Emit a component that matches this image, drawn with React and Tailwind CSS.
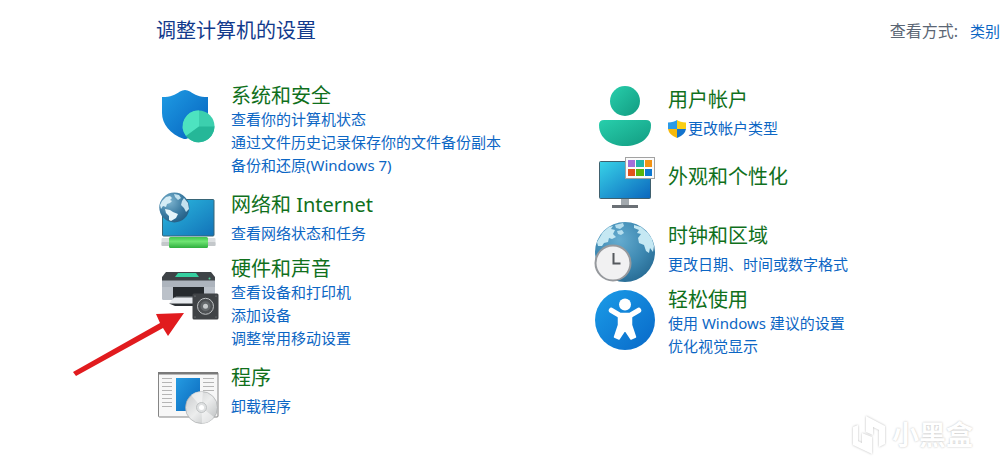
import React from 'react';

const SecurityIcon = () => (
  <svg viewBox="0 0 60 60" className="w-[60px] h-[60px] overflow-visible" aria-hidden="true">
    <defs>
      <linearGradient id="security-shield" x1="0" y1="0" x2="1" y2="1">
        <stop offset="0" stopColor="#1f9ce4" />
        <stop offset="1" stopColor="#0561bd" />
      </linearGradient>
    </defs>
    <path d="M4 11C13 11 17 9 22 5.500Q27 2.500 32 5.500C37 9 41 11 50 11V27C50 40 40 49 28 53H26C12 48 4 38 4 27Z" fill="url(#security-shield)" />
    <circle cx="40.700" cy="40.300" r="15.800" fill="#3ccfae" />
    <path d="M41 40.500V24.500A15.800 15.800 0 0 0 28 50Z" fill="#4de3c0" />
    <path d="M41 40.500H56.500A15.800 15.800 0 0 1 28 50Z" fill="#25b798" />
  </svg>
);

const NetworkIcon = () => (
  <svg viewBox="0 0 60 60" className="w-[60px] h-[60px] overflow-visible" aria-hidden="true">
    <defs>
      <linearGradient id="network-screen" x1="0" y1="0" x2="1" y2="1">
        <stop offset="0" stopColor="#2cbbe0" />
        <stop offset="1" stopColor="#1272b8" />
      </linearGradient>
      <radialGradient id="network-globe" cx="0.35" cy="0.3" r="0.8">
        <stop offset="0" stopColor="#7db4cf" />
        <stop offset="0.6" stopColor="#38789f" />
        <stop offset="1" stopColor="#215a80" />
      </radialGradient>
      <linearGradient id="network-cable" x1="0" y1="0" x2="0" y2="1">
        <stop offset="0" stopColor="#3fc44c" />
        <stop offset="0.4" stopColor="#6fe573" />
        <stop offset="1" stopColor="#2fae3e" />
      </linearGradient>
    </defs>
    <rect x="4.500" y="7.500" width="51.500" height="36.500" rx="1" fill="url(#network-screen)" stroke="#376577" />
    <rect x="3.500" y="46" width="54" height="8" rx="1" fill="#dcdfe1" />
    <rect x="3.500" y="50" width="54" height="4" rx="1" fill="#c4c8cb" />
    <rect x="11" y="45" width="39" height="11" rx="1.500" fill="url(#network-cable)" />
    <circle cx="16.300" cy="15.500" r="15" fill="url(#network-globe)" />
    <path d="M4 9L8 5L12 4L14 6L12 8L14 9L12 11L9 12L8 15L5 14L3 17L2 13Z" fill="#d5ecf5" />
    <path d="M16 2L21 3L23 6L20 8L17 5Z" fill="#c3e2ef" />
    <path d="M7 17L12 18L15 20L20 22L18 26L13 29L11 28L11 24L8 21Z" fill="#e6f5fa" />
    <path d="M26 6L30 11L31 17L28 20L26 16L23 13L24 9Z" fill="#c3e2ef" />
  </svg>
);

const HardwareIcon = () => (
  <svg viewBox="0 0 60 60" className="w-[60px] h-[60px] overflow-visible" aria-hidden="true">
    <path d="M4 20H57V39Q57 41 55 41H6Q4 41 4 39Z" fill="#adb4bd" />
    <path d="M4 28H57V39Q57 41 55 41H6Q4 41 4 39Z" fill="#bbc1c9" />
    <path d="M8 13H53L57 18V21.500H4V18Z" fill="#3e4347" />
    <path d="M20 14H38L41 18H17Z" fill="#36cfa0" />
    <circle cx="51.500" cy="19.500" r="1" fill="#55d49b" />
    <path d="M15 28H46V40H15Z" fill="#262a2e" />
    <path d="M18 37H44V41H16Z" fill="#53585d" />
    <path d="M16 38.500H36V44.500H11Z" fill="#e7eaee" />
    <path d="M11 44.500H36V47H17Z" fill="#2b2f33" />
    <rect x="34.500" y="34.500" width="26" height="26" rx="1.500" fill="#404346" />
    <circle cx="47.500" cy="47.300" r="8" fill="#4d5053" stroke="#bec1c3" />
    <circle cx="47.500" cy="47.300" r="5" fill="#65696c" />
    <circle cx="47.500" cy="47.300" r="2.500" fill="#c8cbcd" />
    <circle cx="37" cy="37" r="0.600" fill="#929699" />
    <circle cx="58" cy="37" r="0.600" fill="#929699" />
    <circle cx="37" cy="58" r="0.600" fill="#929699" />
    <circle cx="58" cy="58" r="0.600" fill="#929699" />
  </svg>
);

const ProgramsIcon = () => (
  <svg viewBox="0 0 60 60" className="w-[60px] h-[60px] overflow-visible" aria-hidden="true">
    <defs>
      <linearGradient id="programs-page" x1="0" y1="0" x2="1" y2="1">
        <stop offset="0" stopColor="#259be1" />
        <stop offset="1" stopColor="#0a67bc" />
      </linearGradient>
      <linearGradient id="programs-disc" x1="0" y1="0" x2="1" y2="1">
        <stop offset="0" stopColor="#c6c8ca" />
        <stop offset="0.5" stopColor="#eceded" />
        <stop offset="1" stopColor="#b7babc" />
      </linearGradient>
    </defs>
    <rect x="0.500" y="7.500" width="59.500" height="44.500" rx="1" fill="#f7f7f7" stroke="#858585" />
    <path d="M0 7H60V9.500H0Z" fill="#7a7a7a" />
    <rect x="18" y="13" width="24" height="33" fill="url(#programs-page)" />
    <path d="M4 13.500H14M4 17.500H14M4 21.500H14M4 25.500H14M4 29.500H14M4 33.500H14M4 37.500H14M4 41.500H14M45 13.500H56M45 17.500H56M45 21.500H56M45 25.500H56" stroke="#b5b5b5" />
    <circle cx="43.500" cy="42.500" r="16" fill="url(#programs-disc)" stroke="#a9acae" strokeWidth="0.700" />
    <path d="M43.500 42.500L33 30Q38 26 45 26.600ZM43.500 42.500L56 52Q51 58.500 44 58.500Z" fill="#fff" opacity="0.5" />
    <circle cx="43.500" cy="42.500" r="5" fill="#dfe1e2" stroke="#b4b7b9" strokeWidth="0.800" />
    <circle cx="43.500" cy="42.500" r="2.500" fill="#fff" />
  </svg>
);

const UserIcon = () => (
  <svg viewBox="0 0 60 60" className="w-[60px] h-[60px] overflow-visible" aria-hidden="true">
    <defs>
      <linearGradient id="user-body" x1="0" y1="0" x2="1" y2="1">
        <stop offset="0" stopColor="#28cfac" />
        <stop offset="1" stopColor="#129b81" />
      </linearGradient>
    </defs>
    <circle cx="30" cy="14" r="15" fill="url(#user-body)" />
    <path d="M9 33H51Q56 33 56 38C56 51 45 59 30 59S4 51 4 38Q4 33 9 33Z" fill="url(#user-body)" />
  </svg>
);

const AppearanceIcon = () => (
  <svg viewBox="0 0 60 60" className="w-[60px] h-[60px] overflow-visible" aria-hidden="true">
    <defs>
      <linearGradient id="appearance-screen" x1="0" y1="0" x2="1" y2="1">
        <stop offset="0" stopColor="#38d3e8" />
        <stop offset="1" stopColor="#0b66bd" />
      </linearGradient>
    </defs>
    <rect x="26" y="44" width="8" height="7" fill="#a3a9ae" />
    <rect x="17" y="50" width="26" height="3" fill="#6b7075" />
    <rect x="4.500" y="6.500" width="51" height="37" rx="1" fill="url(#appearance-screen)" stroke="#40606e" />
    <rect x="30.500" y="2.500" width="29" height="21" fill="#fbfbfb" stroke="#a2a2a2" />
    <rect x="33" y="5" width="7" height="7" fill="#a36fda" />
    <rect x="41" y="5" width="8" height="7" fill="#22b3aa" />
    <rect x="50" y="5" width="7" height="7" fill="#f39313" />
    <rect x="33" y="14" width="7" height="7" fill="#e2521b" />
    <rect x="41" y="14" width="8" height="7" fill="#59b40d" />
    <rect x="50" y="14" width="7" height="7" fill="#0c78d2" />
  </svg>
);

const ClockIcon = () => (
  <svg viewBox="0 0 60 60" className="w-[60px] h-[60px] overflow-visible" aria-hidden="true">
    <defs>
      <radialGradient id="clock-globe" cx="0.4" cy="0.3" r="0.75">
        <stop offset="0" stopColor="#65acd0" />
        <stop offset="0.6" stopColor="#3d88b1" />
        <stop offset="1" stopColor="#276b94" />
      </radialGradient>
    </defs>
    <circle cx="30" cy="29" r="30" fill="url(#clock-globe)" />
    <path d="M2 19L8 9L14 4L18 3L16 6L20 7L18 11L21 14L17 16L14 15L13 19L9 20L7 23L3 23Z" fill="#c5e8f3" />
    <path d="M20 2L28 0L29 3L25 6L21 5ZM22 8L27 7L29 10L26 12L23 11Z" fill="#b5deee" />
    <path d="M39 2L46 4L53 10L57 16L59 23L58 29L55 25L54 30L51 28L49 22L44 20L43 15L46 11L42 10L44 7L39 5Z" fill="#c5e8f3" />
    <circle cx="18" cy="40" r="17.500" fill="#f1f1f2" stroke="#96999d" strokeWidth="2" />
    <path d="M18.500 30V40.500H25.500" fill="none" stroke="#55595d" strokeWidth="2" />
  </svg>
);

const EaseIcon = () => (
  <svg viewBox="0 0 60 60" className="w-[60px] h-[60px] overflow-visible" aria-hidden="true">
    <defs>
      <linearGradient id="ease-disc" x1="0" y1="0" x2="1" y2="1">
        <stop offset="0" stopColor="#1b9de8" />
        <stop offset="1" stopColor="#0868c8" />
      </linearGradient>
    </defs>
    <circle cx="30" cy="30" r="30" fill="url(#ease-disc)" />
    <circle cx="30" cy="14.500" r="6" fill="#fff" />
    <path d="M16.500 20.500L25 25.500H35L43.500 20.500" fill="none" stroke="#fff" strokeWidth="5.500" strokeLinecap="round" strokeLinejoin="round" />
    <path d="M23.500 24H36.500V35L40.500 47L36 49L30 40L24 49L19.500 47L23.500 35Z" fill="#fff" stroke="#fff" strokeWidth="1.500" strokeLinejoin="round" />
  </svg>
);

const AdminShield = () => (
  <svg viewBox="0 0 18 18" className="w-[18px] h-[18px] shrink-0" aria-hidden="true">
    <path d="M9 0Q6 2 0 2.500V9H9Z" fill="#2b9be6" />
    <path d="M9 0Q12 2 18 2.500V9H9Z" fill="#fbcf13" />
    <path d="M0 9H9V18Q1 15 0 9Z" fill="#f6b90d" />
    <path d="M9 9H18Q17 15 9 18Z" fill="#1373cd" />
  </svg>
);

const leftCategories = [
  {
    title: '系统和安全',
    Icon: SecurityIcon,
    links: ['查看你的计算机状态', '通过文件历史记录保存你的文件备份副本', '备份和还原(Windows 7)'],
    spacing: 'mb-[15px]',
  },
  { title: '网络和 Internet', Icon: NetworkIcon, links: ['查看网络状态和任务'], spacing: 'mb-1' },
  {
    title: '硬件和声音',
    Icon: HardwareIcon,
    links: ['查看设备和打印机', '添加设备', '调整常用移动设置'],
    spacing: 'mb-[15px]',
  },
  { title: '程序', Icon: ProgramsIcon, links: ['卸载程序'], spacing: '' },
];

const rightCategories = [
  { title: '用户帐户', Icon: UserIcon, links: ['更改帐户类型'], admin: true, spacing: 'mb-2' },
  { title: '外观和个性化', Icon: AppearanceIcon, links: [], spacing: 'mb-2' },
  { title: '时钟和区域', Icon: ClockIcon, links: ['更改日期、时间或数字格式'], spacing: 'mb-1' },
  { title: '轻松使用', Icon: EaseIcon, links: ['使用 Windows 建议的设置', '优化视觉显示'], spacing: '' },
];

const Category = ({ title, Icon, links, admin, spacing }) => (
  <li className={`flex items-start gap-[13px] ${spacing}`}>
    <div className={links.length > 1 ? 'shrink-0 pt-[3px]' : 'shrink-0'}>
      <Icon />
    </div>
    <div className={links.length === 0 ? 'pt-2.5' : 'pt-px'}>
      <h2 className="text-[20px] leading-6 text-[#10701c]">
        <a href="#" className="hover:underline">{title}</a>
      </h2>
      {links.length > 0 && (
        <ul className={links.length === 1 ? 'mt-[5px]' : ''}>
          {links.map((link) => (
            <li key={link} className="text-[15px] leading-[23px] text-[#0c66c4]">
              <a href="#" className="inline-flex items-center gap-0.5 hover:underline">
                {admin && <AdminShield />}
                {link}
              </a>
            </li>
          ))}
        </ul>
      )}
    </div>
  </li>
);

const Arrow = () => (
  <svg viewBox="0 0 112 65" className="absolute left-[73px] top-[312px] w-[112px] h-[65px] pointer-events-none" aria-hidden="true">
    <path d="M0 60L87 11L83 2L111 1L95 24L90 16L3 64Z" fill="#e11b1e" />
  </svg>
);

const Watermark = () => (
  <div className="absolute bottom-3 right-[29px] flex items-center gap-1.5 pointer-events-none text-white">
    <svg viewBox="0 0 34 40" className="w-[34px] h-10 drop-shadow-[0_0_1px_#bbbbbb]" aria-hidden="true">
      <path d="M1 12L6 10V26L10 28V18L20 22V39L1 30Z" fill="currentColor" />
      <path d="M14 1L33 11V29L27 32V15L21 12V20L14 17Z" fill="currentColor" />
    </svg>
    <span className="text-[27px] leading-10 font-bold [text-shadow:0_0_2px_#bbbbbb]">小黑盒</span>
  </div>
);

export default function App() {
  return (
    <div className="relative min-h-screen overflow-hidden bg-white font-['Noto_Sans','Noto_Sans_CJK_SC',sans-serif]">
      <header className="flex items-center justify-between pt-[19px] pl-[156px] pr-0.5">
        <h1 className="text-[20px] leading-6 text-[#123a8c]">调整计算机的设置</h1>
        <div className="flex items-center gap-3">
          <span id="view-label" className="text-[16px] leading-6 text-[#5b6674]">查看方式:</span>
          <button type="button" aria-labelledby="view-label view-value" className="text-[15px] leading-6 text-[#0c66c4]">
            <span id="view-value">类别</span>
          </button>
        </div>
      </header>

      <main className="grid grid-cols-[437fr_407fr] pt-10 pl-[158px]">
        <ul>
          {leftCategories.map((category) => (
            <Category key={category.title} {...category} />
          ))}
        </ul>
        <ul className="mt-1">
          {rightCategories.map((category) => (
            <Category key={category.title} {...category} />
          ))}
        </ul>
      </main>

      <Arrow />
      <Watermark />
    </div>
  );
}
